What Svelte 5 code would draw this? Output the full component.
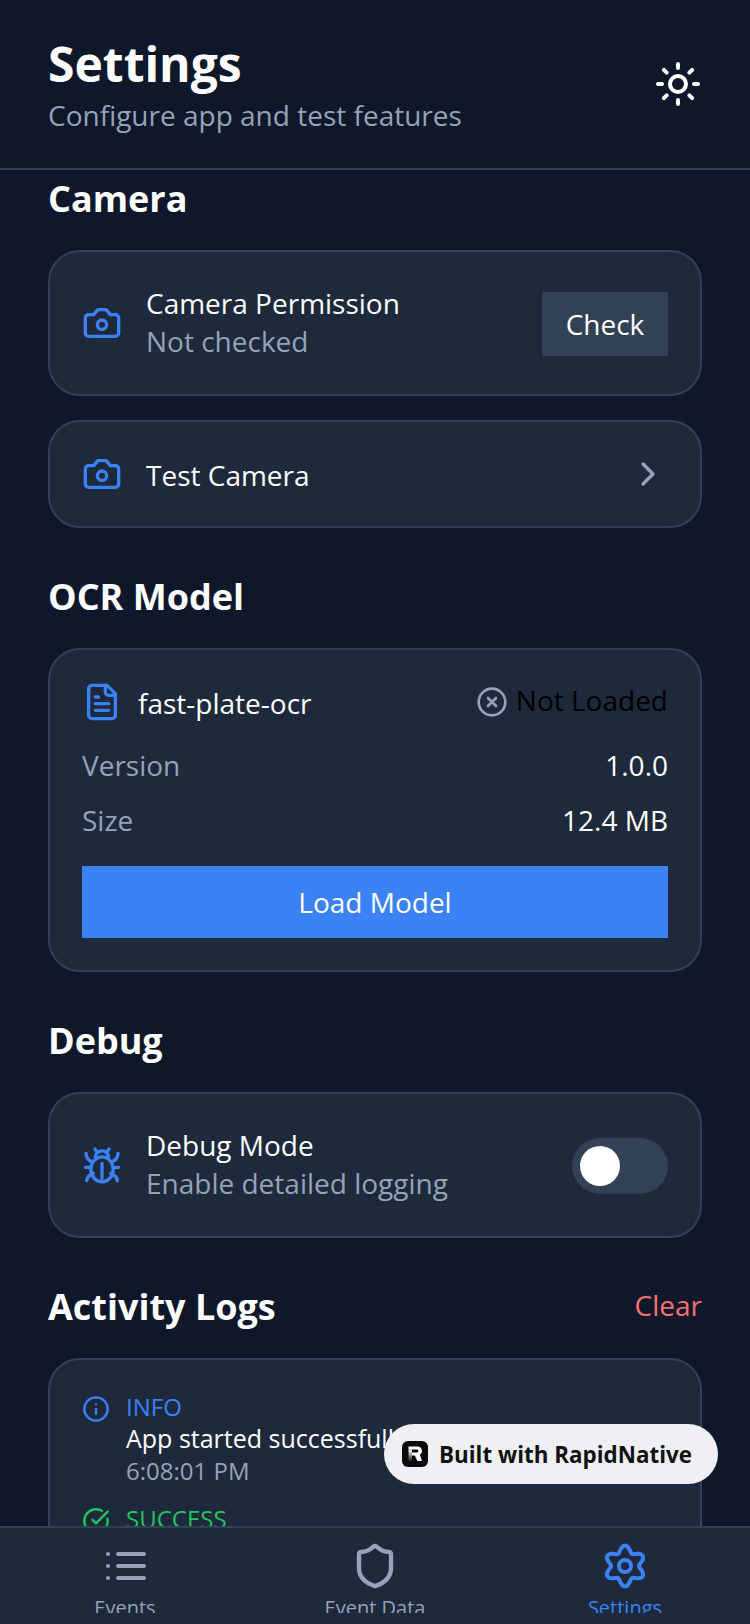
<script lang="ts">
	const tabs = [
		{ label: "Events", icon: "list" },
		{ label: "Event Data", icon: "shield" },
		{ label: "Settings", icon: "gear", active: true }
	];

	// six soft lobes, first one pointing straight up
	const gear_path = Array.from({ length: 121 }, (_, i) => {
		const a = (i / 120) * Math.PI * 2;
		const r = 17.2 + 3.2 * Math.cos(6 * a);
		const x = 24 + r * Math.sin(a);
		const y = 24 - r * Math.cos(a);
		return (i ? "L" : "M") + x.toFixed(2) + " " + y.toFixed(2);
	}).join("") + "Z";
</script>

{#snippet camera()}
	<svg class="icon" viewBox="0 0 24 24" width="40" height="40" fill="none" stroke="#3b82f6" stroke-width="2" stroke-linecap="round" stroke-linejoin="round">
		<path d="M14.5 4h-5L7 7H4a2 2 0 0 0-2 2v9a2 2 0 0 0 2 2h16a2 2 0 0 0 2-2V9a2 2 0 0 0-2-2h-3l-2.5-3z" />
		<circle cx="12" cy="13" r="2.8" />
	</svg>
{/snippet}

<main class="screen">
	<header class="top">
		<div>
			<h1>Settings</h1>
			<p class="subtitle">Configure app and test features</p>
		</div>
		<svg viewBox="0 0 24 24" width="48" height="48" fill="none" stroke="#fff" stroke-width="2" stroke-linecap="round" stroke-linejoin="round">
			<circle cx="12" cy="12" r="4" />
			<path d="M12 2v2M12 20v2M4.93 4.93l1.41 1.41M17.66 17.66l1.41 1.41M2 12h2M20 12h2M6.34 17.66l-1.41 1.41M19.07 4.93l-1.41 1.41" />
		</svg>
	</header>

	<div class="content">
		<h2 class="first">Camera</h2>
		<section class="card row">
			{@render camera()}
			<div class="grow lift">
				<div class="title">Camera Permission</div>
				<div class="muted">Not checked</div>
			</div>
			<button class="check">Check</button>
		</section>
		<section class="card row slim">
			{@render camera()}
			<div class="grow title drop">Test Camera</div>
			<svg viewBox="0 0 24 24" width="40" height="40" fill="none" stroke="#94a3b8" stroke-width="2" stroke-linecap="round" stroke-linejoin="round">
				<path d="m9 18 6-6-6-6" />
			</svg>
		</section>

		<h2>OCR Model</h2>
		<section class="card model">
			<div class="model-head">
				<svg viewBox="0 0 24 24" width="40" height="40" fill="none" stroke="#3b82f6" stroke-width="2" stroke-linecap="round" stroke-linejoin="round">
					<path d="M15 2H6a2 2 0 0 0-2 2v16a2 2 0 0 0 2 2h12a2 2 0 0 0 2-2V7z" />
					<path d="M14 2v4a2 2 0 0 0 2 2h4M8 9h2M8 13h8M8 17h8" />
				</svg>
				<div class="grow title drop">fast-plate-ocr</div>
				<svg class="status-icon" viewBox="0 0 24 24" width="32" height="32" fill="none" stroke="#94a3b8" stroke-width="2" stroke-linecap="round">
					<circle cx="12" cy="12" r="10" />
					<path d="m15 9-6 6M9 9l6 6" />
				</svg>
				<span class="status">Not Loaded</span>
			</div>
			<div class="kv first-kv"><span class="muted">Version</span><span class="title">1.0.0</span></div>
			<div class="kv"><span class="muted">Size</span><span class="title">12.4 MB</span></div>
			<button class="load">Load Model</button>
		</section>

		<h2>Debug</h2>
		<section class="card row">
			<svg class="icon" viewBox="0 0 24 24" width="40" height="40" fill="none" stroke="#3b82f6" stroke-width="2" stroke-linecap="round" stroke-linejoin="round">
				<path d="M7.8 2.4 9 4.5M16.2 2.4 15 4.5M8 7.5a4 4 0 0 1 8 0" />
				<ellipse cx="12" cy="14.6" rx="6.7" ry="7.5" />
				<path d="M12 11v9M2 13.4h3.4M22 13.4h-3.4M2.4 5c.2 2.6 1.4 4.2 3.4 5M21.6 5c-.2 2.6-1.4 4.2-3.4 5M2.8 21.4c.3-2 1.7-3.6 4-4.4M21.2 21.4c-.3-2-1.7-3.6-4-4.4" />
			</svg>
			<div class="grow lift">
				<div class="title">Debug Mode</div>
				<div class="muted">Enable detailed logging</div>
			</div>
			<div class="switch"><span class="knob"></span></div>
		</section>

		<div class="logs-head">
			<h2>Activity Logs</h2>
			<span class="clear">Clear</span>
		</div>
		<section class="card logs">
			<div class="log">
				<svg viewBox="0 0 24 24" width="28" height="28" fill="none" stroke="#3b82f6" stroke-width="2" stroke-linecap="round">
					<circle cx="12" cy="12" r="10" />
					<path d="M12 16v-4M12 8h.01" />
				</svg>
				<div>
					<div class="level info">INFO</div>
					<div class="msg">App started successfully</div>
					<div class="time">6:08:01 PM</div>
				</div>
			</div>
			<div class="log">
				<svg viewBox="0 0 24 24" width="28" height="28" fill="none" stroke="#22c55e" stroke-width="2" stroke-linecap="round" stroke-linejoin="round">
					<path d="M21.8 10A10 10 0 1 1 17 3.3" />
					<path d="m9 11 3 3L22 4" />
				</svg>
				<div>
					<div class="level success">SUCCESS</div>
				</div>
			</div>
		</section>
	</div>

	<nav class="tabs">
		{#each tabs as tab}
			<div class="tab" class:active={tab.active}>
				{#if tab.icon === "list"}
					<svg viewBox="0 0 48 48" width="48" height="48" fill="none" stroke="#94a3b8" stroke-width="4" stroke-linecap="round">
						<path d="M17 12h26M17 24h26M17 36h26" />
						<path d="M7 12h.01M7 24h.01M7 36h.01" />
					</svg>
				{:else if tab.icon === "shield"}
					<svg viewBox="0 0 24 24" width="48" height="48" fill="none" stroke="#94a3b8" stroke-width="2.2" stroke-linecap="round" stroke-linejoin="round">
						<path d="M20 13c0 5-3.5 7.5-7.66 8.95a1 1 0 0 1-.67-.01C7.5 20.5 4 18 4 13V6a1 1 0 0 1 1-1c2 0 4.5-1.2 6.24-2.72a1.17 1.17 0 0 1 1.52 0C14.51 3.81 17 5 19 5a1 1 0 0 1 1 1z" />
					</svg>
				{:else}
					<svg viewBox="0 0 48 48" width="48" height="48" fill="none" stroke="#3b82f6" stroke-width="4" stroke-linejoin="round">
						<path d={gear_path} />
						<circle cx="24" cy="24" r="6" />
					</svg>
				{/if}
				<span class="tab-label">{tab.label}</span>
			</div>
		{/each}
	</nav>

	<div class="badge">
		<svg viewBox="0 0 26 26" width="26" height="26">
			<defs>
				<linearGradient id="stem" x1="0" y1="0" x2="0" y2="1">
					<stop offset="0" stop-color="#fff" />
					<stop offset="1" stop-color="#222" />
				</linearGradient>
			</defs>
			<rect width="26" height="26" rx="6" fill="#0b0b0b" />
			<path d="M6.5 5.5h9a4.4 4.4 0 0 1 2.4 8.1L20 20h-4.6l-2.6-5.6H10v-3h5a1.4 1.4 0 0 0 0-2.9H6.5z" fill="#fff" />
			<path d="M6.5 8.5H10V20H6.5z" fill="url(#stem)" />
		</svg>
		<span>Built with RapidNative</span>
	</div>
</main>

<style>
	:global(body) {
		margin: 0;
		background: #0f172a;
	}
	.screen {
		position: relative;
		width: 750px;
		height: 1624px;
		display: flex;
		flex-direction: column;
		overflow: hidden;
		background: #0f172a;
		color: #fff;
		font-family: "Open Sans", sans-serif;
	}
	.top {
		flex: none;
		box-sizing: border-box;
		height: 170px;
		padding: 0 48px;
		display: flex;
		justify-content: space-between;
		align-items: center;
		border-bottom: 2px solid #334155;
	}
	h1 {
		margin: 0;
		font-size: 48px;
		line-height: 64px;
		font-weight: 700;
	}
	.subtitle {
		margin: 0 0 2px;
		font-size: 28px;
		line-height: 38px;
		color: #94a3b8;
	}
	.content {
		flex: 1;
		min-height: 0;
		overflow: hidden;
		padding: 0 48px;
	}
	h2 {
		margin: 45px 0 27px;
		font-size: 36px;
		line-height: 48px;
		font-weight: 700;
	}
	h2.first {
		margin-top: 5px;
	}
	.card {
		box-sizing: border-box;
		background: #1e293b;
		border: 2px solid #334155;
		border-radius: 32px;
		padding: 32px;
	}
	.row {
		display: flex;
		align-items: center;
		gap: 24px;
		height: 146px;
		margin-bottom: 24px;
	}
	.row.slim {
		height: 108px;
		margin-bottom: 0;
	}
	.grow {
		flex: 1;
		min-width: 0;
	}
	.lift {
		margin-bottom: 2px;
	}
	.drop {
		margin-top: 2px;
	}
	.title {
		font-size: 28px;
		line-height: 38px;
		color: #fff;
	}
	.muted {
		font-size: 28px;
		line-height: 38px;
		color: #94a3b8;
	}
	.check {
		width: 126px;
		height: 64px;
		margin-top: 2px;
		border: 0;
		padding: 0;
		background: #334155;
		color: #fff;
		font: 28px "Open Sans", sans-serif;
	}
	.model-head {
		display: flex;
		align-items: center;
		gap: 16px;
		height: 40px;
	}
	.status-icon {
		margin-right: -8px;
	}
	.status {
		margin-bottom: 4px;
		font-size: 28px;
		line-height: 38px;
		color: #000;
	}
	.kv {
		display: flex;
		justify-content: space-between;
		margin-top: 17px;
	}
	.first-kv {
		margin-top: 24px;
	}
	.load {
		display: block;
		width: 100%;
		height: 72px;
		margin-top: 27px;
		border: 0;
		background: #3b82f6;
		color: #fff;
		font: 28px "Open Sans", sans-serif;
	}
	.switch {
		box-sizing: border-box;
		width: 96px;
		height: 56px;
		margin-top: 2px;
		border-radius: 28px;
		background: #334155;
		padding: 8px;
	}
	.knob {
		display: block;
		width: 40px;
		height: 40px;
		border-radius: 50%;
		background: #fff;
	}
	.logs-head {
		display: flex;
		justify-content: space-between;
		align-items: center;
		margin-top: 45px;
		margin-bottom: 27px;
	}
	.logs-head h2 {
		margin: 0;
	}
	.clear {
		margin-bottom: 4px;
		font-size: 28px;
		color: #f87171;
	}
	.log {
		display: flex;
		gap: 16px;
		margin-bottom: 16px;
	}
	.log svg {
		flex: none;
		margin-top: 3px;
	}
	.level {
		font-size: 24px;
		line-height: 30px;
	}
	.info { color: #3b82f6; }
	.success { color: #22c55e; }
	.msg {
		font-size: 25px;
		line-height: 32px;
		color: #fff;
	}
	.time {
		font-size: 24px;
		line-height: 34px;
		color: #94a3b8;
	}
	.tabs {
		flex: none;
		box-sizing: border-box;
		height: 98px;
		display: flex;
		background: #1e293b;
		border-top: 2px solid #334155;
		padding-top: 14px;
		overflow: hidden;
	}
	.tab {
		flex: 1;
		display: flex;
		flex-direction: column;
		align-items: center;
		height: 71px;
		overflow: hidden;
		color: #94a3b8;
	}
	.tab svg {
		flex: none;
	}
	.tab.active {
		color: #3b82f6;
	}
	.tab-label {
		flex: none;
		margin-top: 4px;
		font-size: 20px;
		line-height: 28px;
	}
	.badge {
		position: absolute;
		left: 384px;
		top: 1424px;
		box-sizing: border-box;
		width: 334px;
		height: 60px;
		display: flex;
		align-items: center;
		gap: 11px;
		padding-left: 18px;
		border-radius: 30px;
		background: #eef0f3;
		color: #111;
		font-size: 22.4px;
		font-weight: 700;
	}
</style>
